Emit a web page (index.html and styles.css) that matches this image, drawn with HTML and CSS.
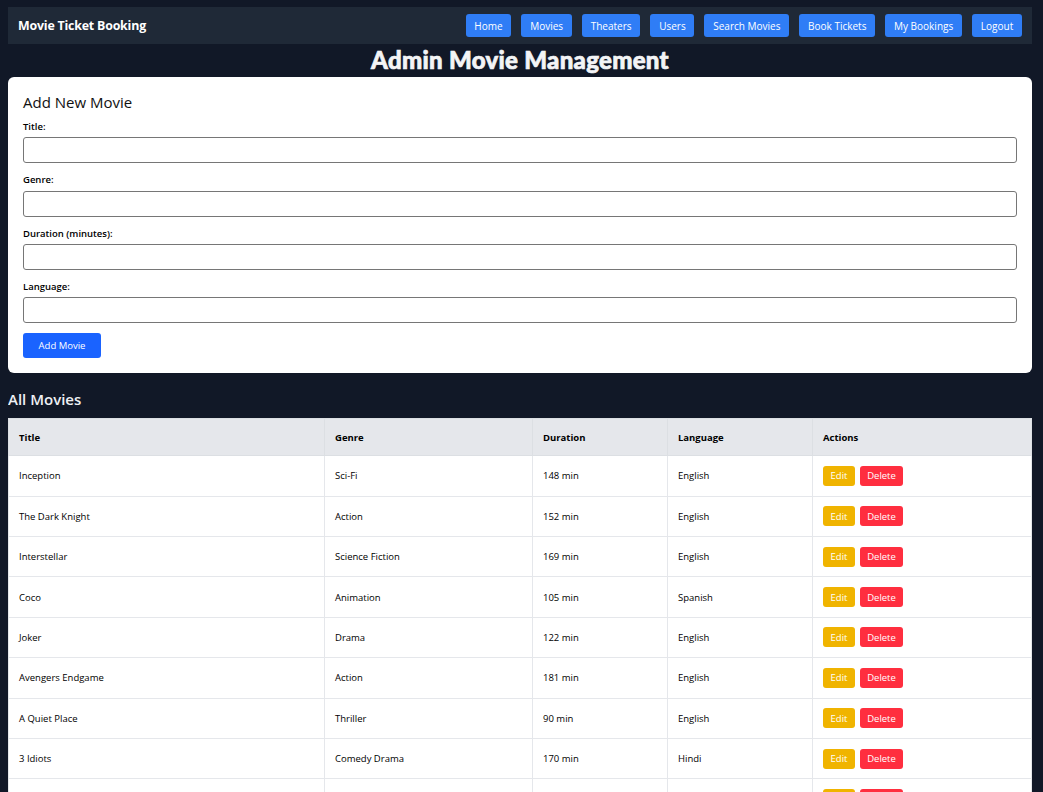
FILE: index.html
```html
<!DOCTYPE html>
<html lang="en">
<head>
<meta charset="utf-8">
<title>Movie Ticket Booking</title>
<link rel="stylesheet" href="styles.css">
</head>
<body>
<div class="page">
  <nav class="navbar">
    <div class="brand">Movie Ticket Booking</div>
    <div class="nav-links">
      <a class="nav-btn">Home</a>
      <a class="nav-btn">Movies</a>
      <a class="nav-btn">Theaters</a>
      <a class="nav-btn">Users</a>
      <a class="nav-btn">Search Movies</a>
      <a class="nav-btn">Book Tickets</a>
      <a class="nav-btn">My Bookings</a>
      <a class="nav-btn">Logout</a>
    </div>
  </nav>
  <h1 class="page-title">Admin Movie Management</h1>
  <section class="card">
    <h2 class="card-title">Add New Movie</h2>
    <div class="form-group">
      <label class="label">Title:</label>
      <input class="input" type="text">
    </div>
    <div class="form-group">
      <label class="label">Genre:</label>
      <input class="input" type="text">
    </div>
    <div class="form-group">
      <label class="label">Duration (minutes):</label>
      <input class="input" type="text">
    </div>
    <div class="form-group">
      <label class="label">Language:</label>
      <input class="input" type="text">
    </div>
    <button class="btn-primary">Add Movie</button>
  </section>
  <h2 class="section-title">All Movies</h2>
  <table class="movies">
    <colgroup>
      <col class="c-title"><col class="c-genre"><col class="c-dur"><col class="c-lang"><col class="c-act">
    </colgroup>
    <thead>
      <tr><th>Title</th><th>Genre</th><th>Duration</th><th>Language</th><th>Actions</th></tr>
    </thead>
    <tbody>
      <tr><td>Inception</td><td>Sci-Fi</td><td>148 min</td><td>English</td><td><button class="btn-edit">Edit</button><button class="btn-del">Delete</button></td></tr>
      <tr><td>The Dark Knight</td><td>Action</td><td>152 min</td><td>English</td><td><button class="btn-edit">Edit</button><button class="btn-del">Delete</button></td></tr>
      <tr><td>Interstellar</td><td>Science Fiction</td><td>169 min</td><td>English</td><td><button class="btn-edit">Edit</button><button class="btn-del">Delete</button></td></tr>
      <tr><td>Coco</td><td>Animation</td><td>105 min</td><td>Spanish</td><td><button class="btn-edit">Edit</button><button class="btn-del">Delete</button></td></tr>
      <tr><td>Joker</td><td>Drama</td><td>122 min</td><td>English</td><td><button class="btn-edit">Edit</button><button class="btn-del">Delete</button></td></tr>
      <tr><td>Avengers Endgame</td><td>Action</td><td>181 min</td><td>English</td><td><button class="btn-edit">Edit</button><button class="btn-del">Delete</button></td></tr>
      <tr><td>A Quiet Place</td><td>Thriller</td><td>90 min</td><td>English</td><td><button class="btn-edit">Edit</button><button class="btn-del">Delete</button></td></tr>
      <tr><td>3 Idiots</td><td>Comedy Drama</td><td>170 min</td><td>Hindi</td><td><button class="btn-edit">Edit</button><button class="btn-del">Delete</button></td></tr>
      <tr><td>Parasite</td><td>Thriller</td><td>132 min</td><td>Korean</td><td><button class="btn-edit">Edit</button><button class="btn-del">Delete</button></td></tr>
    </tbody>
  </table>
</div>
</body>
</html>
```

FILE: styles.css
```css
html, body {
  background: #111827;
}
body {
  margin: 7px 8px 8px 8px;
  font-family: "Open Sans", "Noto Sans", sans-serif;
  color: #000;
}
.page {
  width: 1024px;
}
.navbar {
  display: flex;
  align-items: center;
  justify-content: space-between;
  background: #1f2937;
  height: 37px;
  padding: 0 10px;
}
.brand {
  color: #fff;
  font-weight: 700;
  font-size: 12.4px;
  letter-spacing: -0.2px;
}
.nav-links {
  display: flex;
  gap: 10px;
}
.nav-btn {
  display: flex;
  align-items: center;
  height: 23px;
  padding: 0 8.8px;
  background: #2f7df6;
  color: #fff;
  font-size: 10px;
  border-radius: 3px;
  cursor: pointer;
}
.page-title {
  margin: 0;
  height: 33px;
  line-height: 31px;
  text-align: center;
  color: #f3f4f6;
  font-family: "Lato", "Open Sans", sans-serif;
  font-weight: 900;
  font-size: 24px;
  -webkit-text-stroke: 0.7px #f3f4f6;
  letter-spacing: 0.3px;
}
.card {
  background: #fff;
  border-radius: 6px;
  padding: 15px;
}
.card-title {
  margin: 0 0 8px 0;
  font-size: 15px;
  font-weight: 500;
  line-height: 20px;
  color: #111;
}
.form-group {
  display: flex;
  flex-direction: column;
  margin-bottom: 10px;
}
.label {
  font-size: 9.5px;
  font-weight: 600;
  line-height: 13.3px;
  margin-bottom: 4px;
}
.input {
  height: 26px;
  box-sizing: border-box;
  border: 1px solid #767676;
  border-radius: 3px;
  padding: 0 6px;
  font-size: 11px;
}
.btn-primary {
  display: block;
  width: 78px;
  height: 25px;
  border: 0;
  border-radius: 3px;
  background: #1a63ff;
  color: #fff;
  font-family: inherit;
  font-size: 9.5px;
  padding: 0;
}
.section-title {
  margin: 16px 0 9px 0;
  color: #eef0f4;
  font-size: 15px;
  font-weight: 600;
  line-height: 20px;
}
.movies {
  width: 100%;
  border-collapse: collapse;
  background: #fff;
  font-size: 9.5px;
  table-layout: fixed;
}
.c-title { width: 316px; }
.c-genre { width: 208px; }
.c-dur { width: 135px; }
.c-lang { width: 145px; }
.c-act { width: auto; }
.movies th {
  background: #e5e7eb;
  text-align: left;
  font-weight: 700;
  height: 36px;
  padding: 0 10px;
  border: 1px solid #dcdfe3;
}
.movies td {
  height: 40.4px;
  padding: 0 10px;
  border: 1px solid #e5e7eb;
  box-sizing: border-box;
}
.btn-edit, .btn-del {
  height: 20px;
  border: 0;
  border-radius: 3px;
  color: #fff;
  font-family: inherit;
  font-size: 9.5px;
  padding: 0;
  vertical-align: middle;
}
.btn-edit {
  width: 32px;
  background: #f0b400;
  margin-right: 5px;
}
.btn-del {
  width: 43px;
  background: #ff2e3f;
}
```
